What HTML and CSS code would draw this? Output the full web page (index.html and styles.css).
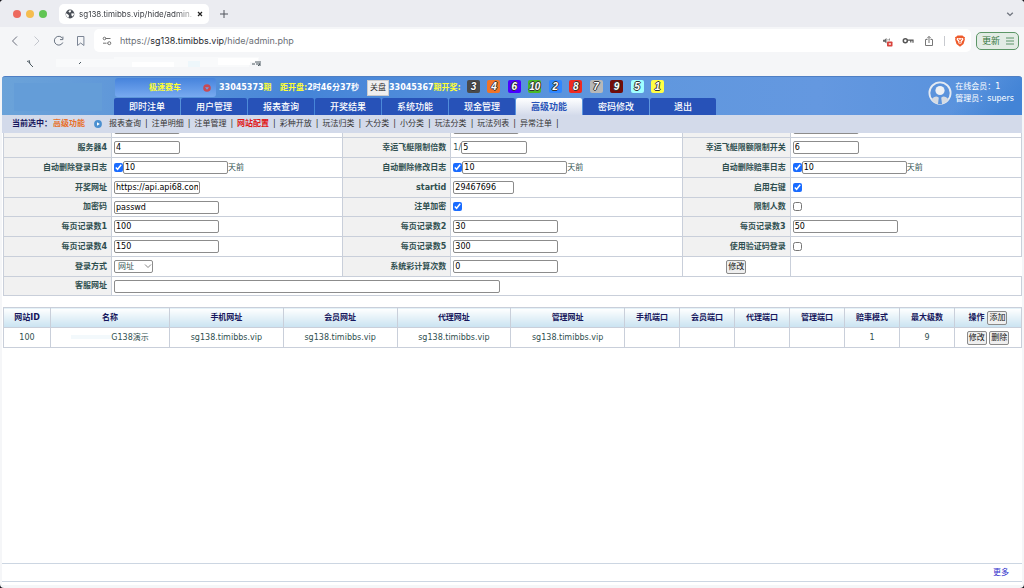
FILE: index.html
```
<!DOCTYPE html>
<html lang="zh-CN">
<head>
<meta charset="utf-8">
<title>sg138.timibbs.vip/hide/admin.php</title>
<link rel="stylesheet" href="styles.css">
</head>
<body>
<div class="window">
  <header class="tabstrip">
    <div class="lights"><i class="light red"></i><i class="light amber"></i><i class="light green"></i></div>
    <div class="tab">
      <svg class="i10" viewBox="0 0 10 10"><circle cx="5" cy="5" r="4.4" fill="#4a4f57"/><path d="M1 4.2 2.8 5.2 4 6.6 3.6 8.8 2 8 .9 6zM4.6 1.2 6.4 1.6 5.6 3.2 4.2 3.6 3.4 2.6zM6.2 4.6 8.6 4.2 9 5.6 7.6 7.6 6.6 6.8z" fill="#fff"/></svg>
      <span class="tab-title">sg138.timibbs.vip/hide/admin.</span>
      <button class="plain" aria-label="关闭"><svg class="i8" viewBox="0 0 8 8"><path d="M2 2l4 4M6 2L2 6" stroke="#222" stroke-width="1.2"/></svg></button>
    </div>
    <button class="plain" aria-label="新标签"><svg class="i10" viewBox="0 0 10 10"><path d="M5 1v8M1 5h8" stroke="#50545c"/></svg></button>
    <button class="plain last" aria-label="标签列表"><svg class="i10" viewBox="0 0 10 10"><path d="M2.2 3.8 5 6.4 7.8 3.8" fill="none" stroke="#70757f" stroke-width="1.4"/></svg></button>
  </header>
  <div class="toolbar">
    <div class="nav-buttons">
      <button class="plain" aria-label="后退"><svg class="i12" viewBox="0 0 12 12"><path d="M8 1.5 3.5 6 8 10.5" fill="none" stroke="#6a6f7d"/></svg></button>
      <button class="plain" aria-label="前进"><svg class="i12" viewBox="0 0 12 12"><path d="M3.5 1.5 8 6l-4.5 4.5" fill="none" stroke="#c3c6cd"/></svg></button>
      <button class="plain" aria-label="刷新"><svg class="i12" viewBox="0 0 12 12"><path d="M9.4 3.2A4.4 4.4 0 1 0 9.8 7.5M9.9 1.6V4.6H7" fill="none" stroke="#6a7482"/></svg></button>
      <button class="plain" aria-label="书签"><svg class="i12" viewBox="0 0 12 12"><path d="M2.5 1.5h6.4v9L5.700 8 2.500 10.500z" fill="none" stroke="#7b8494"/></svg></button>
    </div>
    <div class="address">
      <svg class="i10" viewBox="0 0 10 10"><path d="M3.500 2.500H5.500M4.500 7.200h1.200" stroke="#666" stroke-width=".9"/><path d="M5 2.500h3.500M1 7.200h3" stroke="#666" stroke-width=".9"/><circle cx="2.500" cy="2.500" r="1.300" fill="none" stroke="#666" stroke-width=".9"/><circle cx="7.300" cy="7.200" r="1.500" fill="none" stroke="#666" stroke-width=".9"/></svg>
      <span class="url">https://<b>sg138.timibbs.vip</b>/hide/admin.php</span>
      <div class="actions">
        <svg class="i12" viewBox="0 0 12 12"><path d="M2 4.800h1.500L5.500 3v5.500L3.500 6.800H2z" fill="#666"/><path d="M7 4v1.500M8.500 3.500v2" stroke="#777" stroke-width=".8"/><rect x="6" y="6.500" width="5.500" height="5" rx=".8" fill="#d9433d"/><path d="M7.800 8l2 2M9.800 8l-2 2" stroke="#fff" stroke-width=".8"/></svg>
        <svg class="i12" viewBox="0 0 12 12"><circle cx="3.300" cy="5.700" r="2" fill="none" stroke="#555" stroke-width="1.500"/><path d="M5.300 5.200H11v2.600M8.800 5.200v2.200" fill="none" stroke="#555" stroke-width="1.200"/></svg>
        <svg class="i12" viewBox="0 0 12 12"><path d="M4.500 4.500H2.500v6h7v-6H7.500M6 8V1.500M4 3.400l2-2 2 2" fill="none" stroke="#777"/></svg>
        <i class="divider"></i>
        <svg class="i12" viewBox="0 0 12 12"><path d="M3.500.5h5L9.500 1.500l1.500.8-.4 1.500.3.700L9.500 9 6 11.700 2.500 9 1.100 4.500l.3-.7L1 2.300l1.500-.8z" fill="#ee5a2b"/><path d="M3 3l2 .3 1-.3 1 .3L9 3l.4 1.500L7.500 7l.3 1L6 9.300 4.200 8l.3-1-1.900-2.500z" fill="#fff"/><path d="M4 4l1.600.9L5.400 6.500M8 4l-1.600.9.2 1.600M5 7.500l1 .6 1-.6" stroke="#ee5a2b" stroke-width=".9" fill="none"/></svg>
      </div>
    </div>
    <button class="update">更新<svg class="i10" viewBox="0 0 10 10"><path d="M1 2h8M1 5h8M1 8h8" stroke="#4d8a5a" stroke-width=".9"/></svg></button>
  </div>
  <div class="bookmarks">
    <svg class="marks" viewBox="0 0 272 20"><path d="M56 5h58v8H56zM114 3h145v5h-10v5H114z" fill="#f9fafb"/><path d="M132 8h42v5h-42zM218 4h40v4h-8v3h-32z" fill="#fff"/><path d="M188 7h12v6h-12z" fill="#eef7fb"/><path d="M27 7l3 2M29 6l1 4 3 3M79 10l2-2M252 10h3M255 8h6M256 10h4l-2 2M260 9v3" stroke="#4c5961" fill="none"/></svg>
  </div>

  <main class="app">
    <div class="banner">
      <div class="logo"></div>
      <div class="center">
        <div class="status">
          <button class="game"><span>极速赛车</span><svg class="i8" viewBox="0 0 8 8"><circle cx="4" cy="4" r="3.800" fill="#c84a55"/><path d="M2 3.200h4L4 5.800z" fill="#6fa0e8"/></svg></button>
          <span class="issue">33045373<em>期</em></span>
          <span class="count"><em>距开盘:</em>2时46分37秒</span>
          <button class="grey close-btn">关盘</button>
          <span class="draw">33045367<em>期开奖:</em></span>
          <div class="balls"><i class="ball b3">3</i><i class="ball b4">4</i><i class="ball b6">6</i><i class="ball b10">10</i><i class="ball b2">2</i><i class="ball b8">8</i><i class="ball b7">7</i><i class="ball b9">9</i><i class="ball b5">5</i><i class="ball b1">1</i></div>
        </div>
        <nav class="menu">
          <a href="#">即时注单</a><a href="#">用户管理</a><a href="#">报表查询</a><a href="#">开奖结果</a><a href="#">系统功能</a><a href="#">现金管理</a><a href="#" class="on">高级功能</a><a href="#">密码修改</a><a href="#">退出</a>
        </nav>
      </div>
      <div class="user">
        <svg class="avatar" viewBox="0 0 24 24"><circle cx="12" cy="12" r="10.600" fill="#5b93dc" stroke="#e4eaf2" stroke-width="1.800"/><circle cx="12" cy="9.500" r="4.600" fill="#eef1f5"/><path d="M3.500 18.500c2-3 5-3.600 6.500-2.500L12 18l2-2c1.500-1.100 4.500-.5 6.500 2.500-2 3-5 4.700-8.500 4.700s-6.500-1.700-8.500-4.700z" fill="#d5dbe3"/><path d="M10.800 16.800h2.400L14 23h-4z" fill="#5b93dc"/></svg>
        <div>在线会员：1<br>管理员：supers</div>
      </div>
    </div>
    <nav class="subnav">
      <strong>当前选中：</strong><b class="current">高级功能</b>
      <svg class="i8 arrow" viewBox="0 0 8 8"><circle cx="4" cy="4" r="3.900" fill="#4a8fd0"/><path d="M3 2.200 5.800 4 3 5.800z" fill="#fff"/></svg>
      <ul><li><a href="#">报表查询</a></li><li><a href="#">注单明细</a></li><li><a href="#">注单管理</a></li><li><a href="#" class="hot">网站配置</a></li><li><a href="#">彩种开放</a></li><li><a href="#">玩法归类</a></li><li><a href="#">大分类</a></li><li><a href="#">小分类</a></li><li><a href="#">玩法分类</a></li><li><a href="#">玩法列表</a></li><li><a href="#">异常注单</a></li></ul>
    </nav>
    <div class="content">
      <div class="clip">
      <table class="settings">
        <colgroup><col class="label-col"><col class="field-col"><col class="label-col"><col class="field-col"><col class="label-col"><col class="field-col"></colgroup>
        <tr><th></th><td><input type="text" class="w66" aria-label="服务器1"></td><th></th><td><input type="text" class="w66" aria-label="服务器2"></td><th></th><td><input type="text" class="w66" aria-label="服务器3"></td></tr>
        <tr><th><label for="s4">服务器4</label></th><td><input type="text" id="s4" class="w66" value="4"></td><th><label for="bs">幸运飞艇限制倍数</label></th><td>1/<input type="text" id="bs" class="w66" value="5"></td><th><label for="kg">幸运飞艇限额限制开关</label></th><td><input type="text" id="kg" class="w66" value="6"></td></tr>
        <tr><th><label for="d1">自动删除登录日志</label></th><td><input type="checkbox" checked aria-label="启用自动删除登录日志"><input type="text" id="d1" value="10">天前</td><th><label for="d2">自动删除修改日志</label></th><td><input type="checkbox" checked aria-label="启用自动删除修改日志"><input type="text" id="d2" value="10">天前</td><th><label for="d3">自动删除赔率日志</label></th><td><input type="checkbox" checked aria-label="启用自动删除赔率日志"><input type="text" id="d3" value="10">天前</td></tr>
        <tr><th><label for="kj">开奖网址</label></th><td><input type="text" id="kj" class="w86" value="https://api.api68.com"></td><th><label for="si">startid</label></th><td><input type="text" id="si" class="w60" value="29467696"></td><th><label for="yj">启用右键</label></th><td><input type="checkbox" id="yj" checked></td></tr>
        <tr class="tight"><th><label for="jm">加密码</label></th><td><input type="text" id="jm" value="passwd"></td><th><label for="zd">注单加密</label></th><td><input type="checkbox" id="zd" checked></td><th><label for="rs">限制人数</label></th><td><input type="checkbox" id="rs"></td></tr>
        <tr><th><label for="p1">每页记录数1</label></th><td><input type="text" id="p1" value="100"></td><th><label for="p2">每页记录数2</label></th><td><input type="text" id="p2" value="30"></td><th><label for="p3">每页记录数3</label></th><td><input type="text" id="p3" value="50"></td></tr>
        <tr><th><label for="p4">每页记录数4</label></th><td><input type="text" id="p4" value="150"></td><th><label for="p5">每页记录数5</label></th><td><input type="text" id="p5" value="300"></td><th><label for="yz">使用验证码登录</label></th><td><input type="checkbox" id="yz"></td></tr>
        <tr><th><label for="fs">登录方式</label></th><td><span class="select"><select id="fs"><option>网址</option></select><svg class="i8" viewBox="0 0 8 8"><path d="M1 2.500 4 5.500 7 2.500" fill="none" stroke="#666" stroke-width=".8"/></svg></span></td><th><label for="cs">系统彩计算次数</label></th><td><input type="text" id="cs" value="0"></td><td class="submit"><button class="grey">修改</button></td><td class="open"></td></tr>
        <tr class="tight"><th><label for="kf">客服网址</label></th><td colspan="5"><input type="text" id="kf" class="w386"></td></tr>
      </table>
      </div>
      <table class="sites">
        <colgroup><col class="c-id"><col class="c-name"><col class="c-url"><col class="c-url"><col class="c-url"><col class="c-url"><col class="c-port"><col class="c-port"><col class="c-port"><col class="c-port"><col class="c-port"><col class="c-port"><col class="c-act"></colgroup>
        <thead><tr><th>网站ID</th><th>名称</th><th>手机网址</th><th>会员网址</th><th>代理网址</th><th>管理网址</th><th>手机端口</th><th>会员端口</th><th>代理端口</th><th>管理端口</th><th>赔率模式</th><th>最大级数</th><th>操作 <button class="grey">添加</button></th></tr></thead>
        <tbody><tr><td>100</td><td><span class="masked"></span>G138演示</td><td>sg138.timibbs.vip</td><td>sg138.timibbs.vip</td><td>sg138.timibbs.vip</td><td>sg138.timibbs.vip</td><td></td><td></td><td></td><td></td><td>1</td><td>9</td><td><button class="grey">修改</button> <button class="grey">删除</button></td></tr></tbody>
      </table>
    </div>
    <footer class="more"><a href="#">更多</a></footer>
  </main>
</div>
</body>
</html>
```
FILE: styles.css
```
* { box-sizing: border-box; }
html { height: 100%; background: #15151c; }
body {
  margin: 0;
  height: 100%;
  font: 8px/12px "DejaVu Sans", "Noto Sans CJK SC", sans-serif;
  color: #2f4f4f;
}
button, input, select { font: inherit; margin: 0; }
svg { display: block; flex: none; }
a { color: inherit; text-decoration: none; }
.i8 { width: 8px; height: 8px; }
.i10 { width: 10px; height: 10px; }
.i12 { width: 12px; height: 12px; }
.plain { border: 0; padding: 0; background: none; }

.window {
  display: flex;
  flex-direction: column;
  min-height: 100%;
  background: #f5f6f8;
  border-radius: 4px;
  overflow: hidden;
}

/* browser chrome */
.tabstrip {
  display: flex;
  align-items: center;
  gap: 10px;
  height: 27px;
  padding: 0 9px 0 13px;
  background: #ebecf1;
  font-family: Inter, "Noto Sans CJK SC", sans-serif;
}
.lights { display: flex; gap: 5px; }
.light { width: 8px; height: 8px; border-radius: 50%; }
.red { background: #ed6a5e; }
.amber { background: #f5bd4f; }
.green { background: #61c554; }
.tab {
  display: flex;
  align-items: center;
  justify-content: space-between;
  width: 150px;
  height: 20px;
  margin-left: 2px;
  padding: 0 5px 0 6px;
  border-radius: 5px;
  background: #fff;
  color: #33363c;
}
.tab-title {
  white-space: nowrap;
  background: linear-gradient(90deg, #33363c 85%, #bbb);
  background-clip: text;
  color: transparent;
}
.last { margin-left: auto; }
.toolbar {
  display: flex;
  align-items: center;
  gap: 5px;
  height: 27px;
  padding: 0 5px 0 9px;
  font-family: Inter, "Noto Sans CJK SC", sans-serif;
}
.nav-buttons { display: flex; gap: 10px; }
.address {
  display: flex;
  align-items: center;
  flex: 1;
  gap: 8px;
  height: 23px;
  margin-left: 2px;
  padding: 0 6px 0 8px;
  border-radius: 5px;
  background: #fff;
  font-size: 9px;
  color: #6b6f76;
}
.url b { font-weight: 400; color: #26292e; }
.actions { display: flex; align-items: center; gap: 9px; margin-left: auto; }
.actions svg:first-child { margin-right: 0; }
.divider { width: 1px; height: 10px; background: #c8cacf; }
.actions svg:last-child { margin-right: -1px; }
.update {
  display: flex;
  align-items: center;
  gap: 5px;
  height: 18px;
  padding: 0 3px 0 5px;
  border: 1px solid #5d9667;
  border-radius: 5px;
  background: #e3ece5;
  color: #37783f;
  font-size: 9px;
}
.bookmarks { height: 22px; }
.marks { width: 272px; height: 20px; }

/* application */
.app {
  display: flex;
  flex: 1;
  flex-direction: column;
  margin: 0 2px 3px;
  background: #fff;
}
.banner {
  display: flex;
  height: 39px;
  padding-left: 1px;
  border-top: 1px solid #4f7fc4;
  border-radius: 3px 3px 0 0;
  background:
    linear-gradient(130deg, transparent 93%, #4384d6 98%),
    linear-gradient(90deg, #6ba3d9 0%, #6199d9 10%, #4685d8 30%, #5f97de 60%, #6498e0 80%, #5590dc 100%);
}
.logo { width: 88px; height: 28px; margin: 6px 12px 0 11px; background: #649dd8; }
.center { display: flex; flex-direction: column; justify-content: flex-end; }
.status {
  display: flex;
  align-items: center;
  height: 22px;
  padding-left: 1px;
  color: #fff;
  font-weight: 700;
  white-space: nowrap;
}
.status em { color: #ff3; font-style: normal; }
.game {
  display: flex;
  align-items: center;
  justify-content: flex-end;
  gap: 22px;
  width: 101px;
  height: 19px;
  margin-right: 3px;
  padding: 0 5px;
  border: 0;
  border-radius: 3px;
  background: linear-gradient(#4683dc, #78aaf0);
  color: #ff3;
  font-weight: 700;
}
.issue { width: 61px; }
.count { width: 87px; }
.grey {
  height: 14px;
  padding: 0 1px;
  border: 1px solid #8a8a8a;
  border-radius: 2px;
  background: #efefef;
  color: #111;
  line-height: 12px;
}
.close-btn {
  height: 16px;
  padding: 0 2px;
  border-color: #ccc;
  border-radius: 0;
  color: #333;
  font-weight: 400;
}
.draw { width: 78px; }
.balls { display: flex; justify-content: space-between; width: 197px; margin-bottom: 2px; }
.ball {
  width: 13px;
  height: 13px;
  border-radius: 2px;
  font: italic 700 10px/13px "Liberation Sans", sans-serif;
  text-align: center;
  color: #fff;
  text-shadow: 1px 0 #333, -1px 0 #333, 0 1px #333, 0 -1px #333;
}
.b1 { background: #ff4; }
.b2 { background: #2f86ff; }
.b3 { background: #4a4a4a; }
.b4 { background: #f07428; }
.b5 { background: #a0ffff; }
.b6 { background: #4a00ff; }
.b7 { background: #b8b8b8; }
.b8 { background: #f02a20; }
.b9 { background: #720c08; }
.b10 { background: #48b828; }
.menu { display: flex; gap: 1px; }
.menu a {
  width: 66px;
  height: 17px;
  border-radius: 2px 2px 0 0;
  background: #2752b8;
  color: #fff;
  font-size: 9px;
  font-weight: 500;
  line-height: 18px;
  text-align: center;
}
.menu .on { background: linear-gradient(#fff, #d4dbeb); color: #2752b8; font-weight: 700; }
.user {
  display: flex;
  align-items: center;
  gap: 3px;
  margin-left: auto;
  padding: 0 8px 6px 0;
  color: #fff;
  white-space: nowrap;
}
.avatar { width: 24px; height: 24px; }
.subnav {
  display: flex;
  align-items: center;
  height: 18px;
  padding-left: 10px;
  background: #d3daea;
  color: #333;
  white-space: nowrap;
}
.subnav strong { color: #16165c; }
.current { color: #e8702a; margin-left: 1px; }
.arrow { margin: 0 7px 0 9px; }
.subnav ul { display: flex; margin: 0; padding: 0; list-style: none; }
.subnav li::after { content: "|"; margin: 0 4px; }
.hot { color: #e01818; font-weight: 700; }
.content { flex: 1; padding-left: 1px; }

.clip { overflow: hidden; }
table { width: 100%; border-collapse: collapse; table-layout: fixed; }
th, td { padding: 0; border: 1px solid #c9cfda; }
.settings { margin-top: -16px; }
.settings tr { height: 20px; }
.settings .tight { height: 19px; }
.settings th { padding-right: 4px; background: #f1f1f1; text-align: right; line-height: 12px; }
.settings td { padding-left: 2px; white-space: nowrap; line-height: 12px; }
.label-col { width: 108px; }
.settings input, .select { vertical-align: middle; }
input[type="text"] {
  width: 105px;
  height: 13px;
  padding: 0 1px;
  border: 1px solid #8c8c8c;
  border-radius: 2px;
  background: #fff;
  color: #000;
}
input[type="checkbox"] { width: 9px; height: 9px; accent-color: #1a6cff; }
input.w60 { width: 61px; }
input.w66 { width: 66px; }
input.w86 { width: 86px; }
input.w386 { width: 386px; }
.select { display: inline-block; position: relative; }
.select select {
  display: block;
  width: 39px;
  height: 13px;
  padding: 0 3px;
  border: 1px solid #8c8c8c;
  border-radius: 2px;
  appearance: none;
  background: #fff;
  color: #2f4f4f;
  line-height: 11px;
}
.select svg { position: absolute; right: 1px; top: 2px; pointer-events: none; }
.settings .submit { padding: 0; text-align: center; }
.settings .open { border-right: 0; border-bottom: 0; }

.sites { margin-top: 11px; text-align: center; }
.sites tr { height: 20px; }
.sites th { background: linear-gradient(#fff, #c9e3f1); color: #16165c; }
.sites button { font-weight: 400; }
.c-id { width: 47px; }
.c-name { width: 119px; }
.c-act { width: 67px; }
.c-port { width: 55px; }
.masked { display: inline-block; width: 40px; height: 4px; background: #f3f9fc; vertical-align: middle; }

.more {
  height: 19px;
  margin-bottom: 3px;
  padding-right: 13px;
  border-top: 1px solid #ccd6e2;
  border-bottom: 1px solid #ccd6e2;
  color: #33c;
  line-height: 17px;
  text-align: right;
}
```
